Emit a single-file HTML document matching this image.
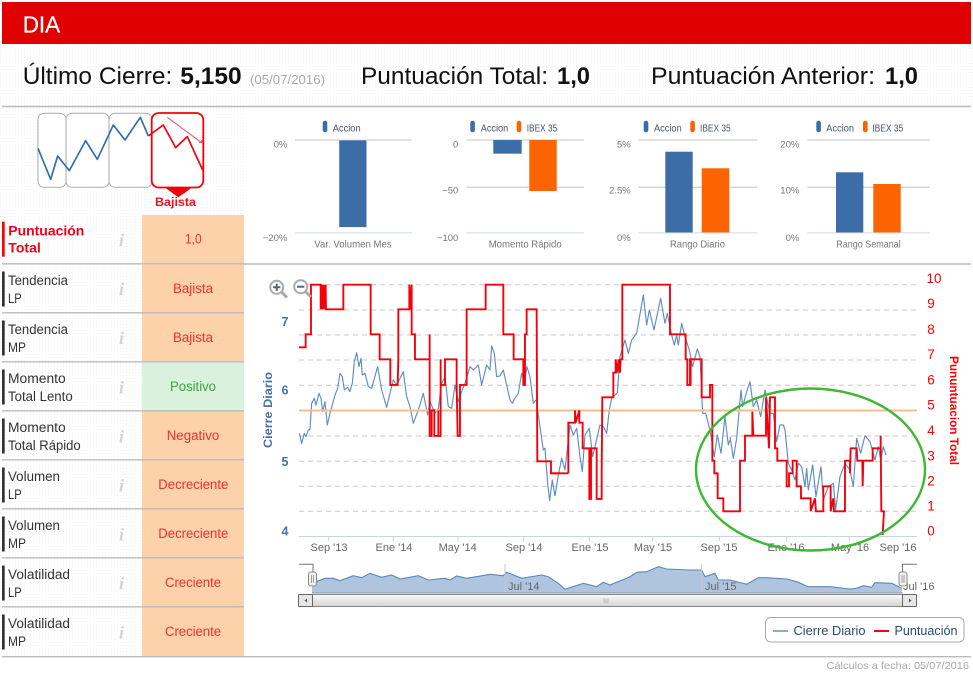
<!DOCTYPE html>
<html lang="es">
<head>
<meta charset="utf-8">
<title>DIA</title>
<style>
html,body{margin:0;padding:0;background:#fff;width:973px;height:675px;overflow:hidden}
svg{display:block;filter:blur(.35px)}
text{font-family:"Liberation Sans",sans-serif}
.lb{font-size:13.5px;fill:#333}
.val{font-size:13.5px;fill:#f03030}
.ax{font-size:9.5px;fill:#777;text-anchor:end}
.leg{font-size:10px;fill:#44566c}
.ttl{font-size:10px;fill:#777}
.xl{font-size:11px;fill:#666;text-anchor:middle}
.yl{font-size:12.5px;fill:#4572a7;font-weight:bold;text-anchor:middle}
.yr{font-size:13.5px;fill:#f00;text-anchor:middle}
.i{font-family:"Liberation Serif",serif;font-style:italic;font-weight:bold;font-size:18px;fill:#d4d4d4;text-anchor:middle}
.sep{stroke:#bbb;stroke-width:1.4}
.grid{stroke:#c4c4c4;stroke-width:1}
.base{stroke:#dfe7f2;stroke-width:1.5}
.dash{stroke:#c8c8c8;stroke-width:1;stroke-dasharray:5 4}
.red{fill:none;stroke:#f5000a;stroke-width:5.6;stroke-linejoin:miter}
.blue{fill:none;stroke:#5e8cc2;stroke-width:3.4;stroke-linejoin:round}
</style>
</head>
<body>
<svg width="973" height="675" viewBox="0 0 973 675" xmlns="http://www.w3.org/2000/svg">
<defs>
<pattern id="dots" width="3" height="3" patternUnits="userSpaceOnUse"><rect width="3" height="3" fill="#fff"/><rect width="1" height="1" fill="#f3f3f3"/></pattern>
<linearGradient id="sb" x1="0" y1="0" x2="0" y2="1"><stop offset="0" stop-color="#fafafa"/><stop offset="1" stop-color="#d4d4d4"/></linearGradient>
</defs>
<rect width="973" height="675" fill="#fff"/>
<rect x="0" y="44" width="973" height="62" fill="url(#dots)"/>
<rect x="0" y="106" width="244" height="550" fill="url(#dots)"/>

<!-- header -->
<rect x="2" y="2" width="969" height="42" fill="#e00000"/>
<text x="22.7" y="32.3" font-size="23.5" fill="#fff" stroke="#fff" stroke-width=".25" textLength="37.5" lengthAdjust="spacingAndGlyphs">DIA</text>

<text x="22.7" y="84" font-size="24.5" fill="#111" textLength="149.6" lengthAdjust="spacingAndGlyphs">Último Cierre:</text>
<text x="180.3" y="84" font-size="24.5" font-weight="bold" fill="#111" textLength="61.4" lengthAdjust="spacingAndGlyphs">5,150</text>
<text x="250" y="84" font-size="12.5" fill="#aaa" textLength="75" lengthAdjust="spacingAndGlyphs">(05/07/2016)</text>
<text x="361" y="84" font-size="24.5" fill="#111" textLength="187" lengthAdjust="spacingAndGlyphs">Puntuación Total:</text>
<text x="557" y="84" font-size="24.5" font-weight="bold" fill="#111" textLength="33" lengthAdjust="spacingAndGlyphs">1,0</text>
<text x="651" y="84" font-size="24.5" fill="#111" textLength="224" lengthAdjust="spacingAndGlyphs">Puntuación Anterior:</text>
<text x="885" y="84" font-size="24.5" font-weight="bold" fill="#111" textLength="33" lengthAdjust="spacingAndGlyphs">1,0</text>
<line x1="2" y1="106.5" x2="971" y2="106.5" class="sep"/>

<!-- trend diagram -->
<g fill="#fff" stroke="#aaa" stroke-width="1">
<rect x="38" y="113.3" width="28" height="74" rx="6"/>
<rect x="66" y="113.3" width="43" height="74" rx="6"/>
<rect x="109" y="113.3" width="43" height="74" rx="6"/>
</g>
<rect x="151.7" y="113" width="51.6" height="74.5" rx="7" fill="#fff" stroke="#f5000a" stroke-width="1.8"/>
<polygon points="165,187.5 191.7,187.5 186,192 178.3,197.3 171,192" fill="#f5000a"/>
<g transform="translate(0,100) scale(.3333)" fill="none" stroke-linejoin="round">
<polyline points="114,145 152,238 173,168 208,212 257,122 292,178 340,75 375,120 421,52 445,108" stroke="#2f6cb3" stroke-width="5"/>
<polyline points="445,108 490,75 527,143 562,110 608,210" stroke="#f5000a" stroke-width="5"/>
<polyline points="502,52 605,128" stroke="#f0506a" stroke-width="3"/>
<polyline points="597,128 607,128 604,120" stroke="#f0506a" stroke-width="3"/>
</g>
<text x="155" y="206" font-size="12" font-weight="bold" fill="#f01020" textLength="41" lengthAdjust="spacingAndGlyphs">Bajista</text>

<!-- left table -->
<g>
<rect x="142" y="215" width="102" height="441" fill="#fdd1aa"/>
<rect x="142" y="362" width="102" height="48.5" fill="#daf1dd"/>
<g class="sep">
<line x1="2" y1="263.8" x2="244" y2="263.8"/><line x1="2" y1="312.8" x2="244" y2="312.8"/><line x1="2" y1="361.8" x2="244" y2="361.8"/><line x1="2" y1="410.8" x2="244" y2="410.8"/><line x1="2" y1="459.8" x2="244" y2="459.8"/><line x1="2" y1="508.8" x2="244" y2="508.8"/><line x1="2" y1="557.8" x2="244" y2="557.8"/><line x1="2" y1="606.8" x2="244" y2="606.8"/>
</g>
<rect x="2" y="221.7" width="2.7" height="35" fill="#f00"/>
<g fill="#333">
<rect x="2" y="271.5" width="2.7" height="35"/><rect x="2" y="320.5" width="2.7" height="35"/><rect x="2" y="369.5" width="2.7" height="35"/><rect x="2" y="418.5" width="2.7" height="35"/><rect x="2" y="467.5" width="2.7" height="35"/><rect x="2" y="516.5" width="2.7" height="35"/><rect x="2" y="565.5" width="2.7" height="35"/><rect x="2" y="614.5" width="2.7" height="35"/>
</g>

<text x="8.3" y="235.3" font-size="13.5" font-weight="bold" fill="#f00018" textLength="76" lengthAdjust="spacingAndGlyphs">Puntuación</text>
<text x="8.3" y="252.3" font-size="13.5" font-weight="bold" fill="#f00018" textLength="32.5" lengthAdjust="spacingAndGlyphs">Total</text>

<text class="lb" x="8" y="285.2" textLength="60" lengthAdjust="spacingAndGlyphs">Tendencia</text><text class="lb" x="8" y="303" textLength="13.7" lengthAdjust="spacingAndGlyphs">LP</text>
<text class="lb" x="8" y="334.2" textLength="60" lengthAdjust="spacingAndGlyphs">Tendencia</text><text class="lb" x="8" y="352" textLength="18" lengthAdjust="spacingAndGlyphs">MP</text>
<text class="lb" x="8" y="383.2" textLength="57.7" lengthAdjust="spacingAndGlyphs">Momento</text><text class="lb" x="8" y="401" textLength="64.7" lengthAdjust="spacingAndGlyphs">Total Lento</text>
<text class="lb" x="8" y="432.2" textLength="57.7" lengthAdjust="spacingAndGlyphs">Momento</text><text class="lb" x="8" y="450" textLength="72.7" lengthAdjust="spacingAndGlyphs">Total Rápido</text>
<text class="lb" x="8" y="481.2" textLength="52" lengthAdjust="spacingAndGlyphs">Volumen</text><text class="lb" x="8" y="499" textLength="13.7" lengthAdjust="spacingAndGlyphs">LP</text>
<text class="lb" x="8" y="530.2" textLength="52" lengthAdjust="spacingAndGlyphs">Volumen</text><text class="lb" x="8" y="548" textLength="18" lengthAdjust="spacingAndGlyphs">MP</text>
<text class="lb" x="8" y="579.2" textLength="62" lengthAdjust="spacingAndGlyphs">Volatilidad</text><text class="lb" x="8" y="597" textLength="13.7" lengthAdjust="spacingAndGlyphs">LP</text>
<text class="lb" x="8" y="628.2" textLength="62" lengthAdjust="spacingAndGlyphs">Volatilidad</text><text class="lb" x="8" y="646" textLength="18" lengthAdjust="spacingAndGlyphs">MP</text>

<text class="i" x="121.5" y="246">i</text><text class="i" x="121.5" y="295">i</text><text class="i" x="121.5" y="344">i</text><text class="i" x="121.5" y="393.5">i</text><text class="i" x="121.5" y="442.5">i</text><text class="i" x="121.5" y="491.5">i</text><text class="i" x="121.5" y="540.5">i</text><text class="i" x="121.5" y="589.5">i</text><text class="i" x="121.5" y="638.5">i</text>

<text class="val" x="185" y="243.5" textLength="16.7" lengthAdjust="spacingAndGlyphs">1,0</text>
<text class="val" x="173" y="293" textLength="40" lengthAdjust="spacingAndGlyphs">Bajista</text>
<text class="val" x="173" y="342" textLength="40" lengthAdjust="spacingAndGlyphs">Bajista</text>
<text x="170" y="391" font-size="13.5" fill="#3da63d" textLength="46" lengthAdjust="spacingAndGlyphs">Positivo</text>
<text class="val" x="166.7" y="440" textLength="52.6" lengthAdjust="spacingAndGlyphs">Negativo</text>
<text class="val" x="158.3" y="489" textLength="70" lengthAdjust="spacingAndGlyphs">Decreciente</text>
<text class="val" x="158.3" y="538" textLength="70" lengthAdjust="spacingAndGlyphs">Decreciente</text>
<text class="val" x="165" y="587" textLength="56" lengthAdjust="spacingAndGlyphs">Creciente</text>
<text class="val" x="165" y="636" textLength="56" lengthAdjust="spacingAndGlyphs">Creciente</text>
</g>

<line x1="244" y1="264" x2="971" y2="264" class="sep"/>

<!-- bar chart 1 -->
<rect x="322.7" y="120.7" width="4.6" height="11.6" rx="2.3" fill="#3d6da6"/>
<text class="leg" x="332.7" y="131.3" textLength="28" lengthAdjust="spacingAndGlyphs">Accion</text>
<line x1="295" y1="140" x2="411.7" y2="140" class="grid"/>
<line x1="295" y1="232.7" x2="411.7" y2="232.7" class="base"/>
<rect x="339" y="140" width="27.7" height="87.3" fill="#3d6da6" stroke="#dde6f2" stroke-width=".6"/>
<text class="ax" x="287.3" y="147.5">0%</text><text class="ax" x="287.3" y="241">−20%</text>
<text class="ttl" x="314.3" y="247.3" textLength="77.4" lengthAdjust="spacingAndGlyphs">Var. Volumen Mes</text>

<!-- bar chart 2 -->
<rect x="470.3" y="120.7" width="4.6" height="11.6" rx="2.3" fill="#3d6da6"/>
<text class="leg" x="480.7" y="131.3" textLength="27.6" lengthAdjust="spacingAndGlyphs">Accion</text>
<rect x="516.7" y="120.7" width="4.6" height="11.6" rx="2.3" fill="#fb6400"/>
<text class="leg" x="526.7" y="131.3" textLength="30.6" lengthAdjust="spacingAndGlyphs">IBEX 35</text>
<line x1="466.7" y1="140" x2="584" y2="140" class="grid"/>
<line x1="466.7" y1="187.3" x2="584" y2="187.3" class="grid"/>
<line x1="466.7" y1="232.7" x2="584" y2="232.7" class="base"/>
<rect x="493.3" y="140" width="28.4" height="13.7" fill="#3d6da6"/>
<rect x="529.3" y="140" width="27.4" height="51" fill="#fb6400"/>
<text class="ax" x="458.3" y="147.5">0</text><text class="ax" x="458.3" y="193.7">−50</text><text class="ax" x="458.3" y="241">−100</text>
<text class="ttl" x="488.7" y="247.3" textLength="73" lengthAdjust="spacingAndGlyphs">Momento Rápido</text>

<!-- bar chart 3 -->
<rect x="643.7" y="120.7" width="4.6" height="11.6" rx="2.3" fill="#3d6da6"/>
<text class="leg" x="654" y="131.3" textLength="27.7" lengthAdjust="spacingAndGlyphs">Accion</text>
<rect x="690.3" y="120.7" width="4.6" height="11.6" rx="2.3" fill="#fb6400"/>
<text class="leg" x="700" y="131.3" textLength="30.7" lengthAdjust="spacingAndGlyphs">IBEX 35</text>
<line x1="638.3" y1="140" x2="757.3" y2="140" class="grid"/>
<line x1="638.3" y1="187.3" x2="757.3" y2="187.3" class="grid"/>
<line x1="638.3" y1="232.7" x2="757.3" y2="232.7" class="base"/>
<rect x="665.3" y="151.7" width="27.4" height="80.8" fill="#3d6da6"/>
<rect x="701.7" y="168.3" width="27.6" height="64.2" fill="#fb6400"/>
<text class="ax" x="630.7" y="147.5">5%</text><text class="ax" x="630.7" y="193.7">2.5%</text><text class="ax" x="630.7" y="241">0%</text>
<text class="ttl" x="670" y="247.3" textLength="55" lengthAdjust="spacingAndGlyphs">Rango Diario</text>

<!-- bar chart 4 -->
<rect x="816.3" y="120.7" width="4.6" height="11.6" rx="2.3" fill="#3d6da6"/>
<text class="leg" x="826.3" y="131.3" textLength="27.7" lengthAdjust="spacingAndGlyphs">Accion</text>
<rect x="863" y="120.7" width="4.6" height="11.6" rx="2.3" fill="#fb6400"/>
<text class="leg" x="872.3" y="131.3" textLength="31" lengthAdjust="spacingAndGlyphs">IBEX 35</text>
<line x1="807.3" y1="140" x2="930" y2="140" class="grid"/>
<line x1="807.3" y1="187.3" x2="930" y2="187.3" class="grid"/>
<line x1="807.3" y1="232.7" x2="930" y2="232.7" class="base"/>
<rect x="836" y="172.3" width="27.3" height="60.2" fill="#3d6da6"/>
<rect x="873.3" y="184" width="27.4" height="48.5" fill="#fb6400"/>
<text class="ax" x="799.3" y="147.5">20%</text><text class="ax" x="799.3" y="193.7">10%</text><text class="ax" x="799.3" y="241">0%</text>
<text class="ttl" x="836.3" y="247.3" textLength="64.4" lengthAdjust="spacingAndGlyphs">Rango Semanal</text>

<!-- main chart grid -->
<g class="dash">
<line x1="299" y1="284.7" x2="917" y2="284.7"/><line x1="299" y1="310" x2="917" y2="310"/><line x1="299" y1="335" x2="917" y2="335"/><line x1="299" y1="360" x2="917" y2="360"/><line x1="299" y1="385.3" x2="917" y2="385.3"/><line x1="299" y1="436" x2="917" y2="436"/><line x1="299" y1="461.3" x2="917" y2="461.3"/><line x1="299" y1="486.3" x2="917" y2="486.3"/><line x1="299" y1="511.3" x2="917" y2="511.3"/>
</g>
<line x1="299" y1="536.5" x2="917" y2="536.5" stroke="#c5d4e6" stroke-width="1"/>
<g stroke="#c5d4e6" stroke-width="1">
<line x1="328.7" y1="536.5" x2="328.7" y2="541"/><line x1="393.3" y1="536.5" x2="393.3" y2="541"/><line x1="458" y1="536.5" x2="458" y2="541"/><line x1="523.7" y1="536.5" x2="523.7" y2="541"/><line x1="589.3" y1="536.5" x2="589.3" y2="541"/><line x1="652.7" y1="536.5" x2="652.7" y2="541"/><line x1="719.3" y1="536.5" x2="719.3" y2="541"/><line x1="786.7" y1="536.5" x2="786.7" y2="541"/><line x1="849.3" y1="536.5" x2="849.3" y2="541"/><line x1="930" y1="536.5" x2="930" y2="541"/>
</g>

<!-- blue series -->
<g transform="translate(255,270) scale(.3333)">
<polyline class="blue" points="133,490 140,520 148,490 153,500 160,480 165,478 170,400 178,385 183,405 192,370 198,385 203,425 210,395 217,465 225,430 240,375 248,355 255,310 262,320 268,360 278,352 284,365 292,340 298,275 305,248 312,290 318,265 322,315 330,310 340,350 350,355 368,290 380,360 395,412 405,370 415,330 425,345 445,305 455,380 465,410 475,460 490,420 505,370 518,435 525,395 540,430 550,415 560,340 570,320 580,410 590,415 600,345 610,395 620,365 630,340 645,290 655,300 670,285 680,345 695,285 705,300 710,228 718,250 725,320 735,318 745,300 755,345 765,390 772,400 780,385 790,370 800,310 808,340 816,290 825,320 835,400 845,388 848,420 855,470 865,540 870,535 878,640 884,692 892,630 900,678"/>
</g>
<g transform="translate(530,270) scale(.3333)">
<polyline class="blue" points="75,678 85,615 95,565 105,600 120,465 130,495 140,475 150,560 157,605 165,495 178,475 188,560 195,530 210,465 220,470 230,490 238,420 245,385 262,368 270,260 285,210 295,250 305,210 320,190 340,75 350,165 358,120 372,180 392,85 405,160 412,130 425,195 433,225 440,195 445,225 455,160 465,200 478,240 488,290 502,237 510,260 518,430 527,430 540,480 553,560 562,495 573,550 585,440 595,525 600,510"/>
</g>
<g transform="translate(690,270) scale(.3333)">
<polyline class="blue" points="120,500 130,565 140,505 153,360 158,410 170,365 180,335 190,410 200,390 212,440 225,360 240,430 250,430 260,515 270,465 280,465 285,480 295,580 305,600 315,630 325,580 335,590 345,650 350,595 355,660 368,585 378,680 393,590 400,690 415,650 430,640 437,720 450,620 465,580 480,600 490,650 500,505 512,550 525,497 540,515 555,570 565,530 572,570 580,530 588,555"/>
</g>

<line x1="299" y1="410.5" x2="917" y2="410.5" stroke="#f9bd88" stroke-width="2"/>

<!-- red series -->
<g transform="translate(255,270) scale(.3333)">
<polyline class="red" points="132,232 152,232 152,193 168,193 168,44 197,44 197,118 200,44 203,118 206,44 209,118 212,44 213,118 265,118 265,44 347,44 347,193 374,193 374,268 406,268 406,345 428,345 430,268 430,118 463,118 463,44 466,118 470,44 470,193 480,193 480,268 524,268 524,193 524,498 530,498 530,421 538,421 538,498 550,498 550,421 550,498 557,498 557,268 557,345 570,345 570,268 605,268 605,345 608,498 615,498 615,345 635,345 635,118 692,118 692,44 745,44 745,193 776,193 776,268 805,268 805,345 810,345 810,193 815,193 815,118 845,118 847,574 888,574 888,610 915,610"/>
</g>
<g transform="translate(530,270) scale(.3333)">
<polyline class="red" points="115,610 115,458 135,458 135,421 137,458 148,421 148,458 158,458 158,535 178,535 178,687 183,687 183,535 200,535 200,687 215,687 215,610 217,382 250,382 250,308 257,308 257,268 262,308 266,268 270,308 272,268 277,268 277,44 420,44 420,193 467,193 467,268 472,268 472,345 482,345 482,268 495,268"/>
<polyline class="red" points="62,610 115,610"/>
</g>
<g transform="translate(690,270) scale(.3333)">
<polyline class="red" points="0,345 0,268 35,268 35,382 60,382 60,345 67,345 67,572 73,572 73,610 83,610 83,685 100,685 100,724 150,724 150,572 165,572 165,497 187,497 187,425 190,497 228,497 228,382 237,535 240,382 255,382 255,535 262,535 262,572 290,572 290,649 297,649 297,610 308,610 308,572 320,572 320,649 333,649 333,685 362,685 362,724 375,685 378,724 400,724 400,649 422,649 422,724 430,685 432,724 465,724 465,572 480,572 480,610 482,535 500,535 502,572 517,572 518,649 520,572 548,572 548,535 572,535 572,497 574,724 582,724 578,795"/>
</g>

<!-- axes text -->
<text class="yl" x="285" y="326">7</text><text class="yl" x="285" y="394.5">6</text><text class="yl" x="285" y="466">5</text><text class="yl" x="285" y="535.5">4</text>
<text transform="translate(272,410) rotate(-90)" font-size="12" font-weight="bold" fill="#4572a7" text-anchor="middle" textLength="76" lengthAdjust="spacingAndGlyphs">Cierre Diario</text>

<text class="yr" x="934" y="283">10</text><text class="yr" x="931" y="308">9</text><text class="yr" x="931" y="334">8</text><text class="yr" x="931" y="359">7</text><text class="yr" x="931" y="384.6">6</text><text class="yr" x="931" y="409.6">5</text><text class="yr" x="931" y="435">4</text><text class="yr" x="931" y="460.3">3</text><text class="yr" x="931" y="485.3">2</text><text class="yr" x="931" y="510.6">1</text><text class="yr" x="931" y="535.6">0</text>
<text transform="translate(950,410.5) rotate(90)" font-size="12" font-weight="bold" fill="#f00" text-anchor="middle" textLength="109" lengthAdjust="spacingAndGlyphs">Pununtuacion Total</text>

<text class="xl" x="329" y="551">Sep '13</text><text class="xl" x="394" y="551">Ene '14</text><text class="xl" x="457.7" y="551">May '14</text><text class="xl" x="524" y="551">Sep '14</text><text class="xl" x="590" y="551">Ene '15</text><text class="xl" x="653" y="551">May '15</text><text class="xl" x="719" y="551">Sep '15</text><text class="xl" x="786" y="551">Ene '16</text><text class="xl" x="850" y="551">May '16</text><text class="xl" x="898" y="551">Sep '16</text>

<!-- zoom icons -->
<g fill="#fff" stroke="#aaa">
<line x1="281.5" y1="292" x2="287" y2="297.5" stroke-width="3"/>
<circle cx="276.7" cy="287.3" r="6.5" stroke-width="2"/>
<line x1="305.5" y1="291.5" x2="311" y2="297" stroke-width="3"/>
<circle cx="300.7" cy="286.7" r="6.5" stroke-width="2"/>
</g>
<path d="M273 287.3h7.4M276.7 283.6v7.4" stroke="#4a6b84" stroke-width="2" fill="none"/>
<path d="M297 286.7h7.4" stroke="#4a6b84" stroke-width="2" fill="none"/>

<!-- navigator -->
<path d="M312 592.7V583.3L325 578.3 333.3 578.3 340 580.7 353.3 575.7 361.7 577.7 370 573.3 381.7 577.3 391.7 575 400 579 418.3 575.7 428.3 580 445 578.3 450 580 456.7 576 466.7 578.3 490 574.3 503.3 575.7 506.7 572.3 521.7 578.3 541.7 575 548.3 576.7 558.3 583.3 565 589.3 583.3 583.3 596.7 586.7 603.3 582.3 610 585 630 576.7 636.7 572.3 646.7 571.7 658.3 566.7 666.7 569 690 570 701.7 570 705 576.7 715 573.3 718.3 580 730 580 746.7 584.3 758.3 577.7 766.7 577.7 786.7 579 796.7 581.7 808.3 586.7 830 586.7 850 589 856.7 588.3 863.3 585.7 871.7 587.3 875 582.7 891.7 583.3 901.7 588.3V592.7Z" fill="#aec4df" stroke="none"/>
<path d="M312 583.3L325 578.3 333.3 578.3 340 580.7 353.3 575.7 361.7 577.7 370 573.3 381.7 577.3 391.7 575 400 579 418.3 575.7 428.3 580 445 578.3 450 580 456.7 576 466.7 578.3 490 574.3 503.3 575.7 506.7 572.3 521.7 578.3 541.7 575 548.3 576.7 558.3 583.3 565 589.3 583.3 583.3 596.7 586.7 603.3 582.3 610 585 630 576.7 636.7 572.3 646.7 571.7 658.3 566.7 666.7 569 690 570 701.7 570 705 576.7 715 573.3 718.3 580 730 580 746.7 584.3 758.3 577.7 766.7 577.7 786.7 579 796.7 581.7 808.3 586.7 830 586.7 850 589 856.7 588.3 863.3 585.7 871.7 587.3 875 582.7 891.7 583.3 901.7 588.3" fill="none" stroke="#5b87bd" stroke-width="1.1"/>
<line x1="505" y1="564" x2="505" y2="593" stroke="#c8c8c8" stroke-width="1"/>
<line x1="701.7" y1="564" x2="701.7" y2="593" stroke="#c8c8c8" stroke-width="1"/>
<text x="508" y="590" font-size="11" fill="#666">Jul '14</text>
<text x="705" y="590" font-size="11" fill="#666">Jul '15</text>
<text x="903" y="590" font-size="11" fill="#666">Jul '16</text>
<path d="M299 564.3H313V572M902.5 572V564.3H917" fill="none" stroke="#777" stroke-width="1"/>
<rect x="308.5" y="572" width="8" height="14" rx="2.5" fill="#f2f2f2" stroke="#888" stroke-width="1"/>
<path d="M311.5 575v8M313.5 575v8" stroke="#888" stroke-width=".8"/>
<rect x="899" y="572" width="8" height="14" rx="2.5" fill="#f2f2f2" stroke="#888" stroke-width="1"/>
<path d="M902 575v8M904 575v8" stroke="#888" stroke-width=".8"/>
<line x1="312" y1="593" x2="903" y2="593" stroke="#777" stroke-width=".8"/>
<rect x="298.5" y="594.5" width="618" height="12" rx="1" fill="url(#sb)" stroke="#888" stroke-width="1"/>
<rect x="298.5" y="594.5" width="14" height="12" rx="1" fill="#e6e6e6" stroke="#666" stroke-width="1"/>
<rect x="902.5" y="594.5" width="14" height="12" rx="1" fill="#e6e6e6" stroke="#666" stroke-width="1"/>
<path d="M307 598.5v4l-2.5-2z" fill="#555"/>
<path d="M909 598.5v4l2.5-2z" fill="#555"/>
<path d="M604 598.5v4.5M606 598.5v4.5M608 598.5v4.5" stroke="#aaa" stroke-width=".8"/>

<!-- legend -->
<rect x="765.5" y="617.5" width="198.5" height="24.5" rx="5" fill="#fff" stroke="#aaa" stroke-width="1"/>
<line x1="773" y1="631" x2="788" y2="631" stroke="#8eacd3" stroke-width="2"/>
<text x="793.5" y="635" font-size="12.5" fill="#274b6d" textLength="72" lengthAdjust="spacingAndGlyphs">Cierre Diario</text>
<line x1="874" y1="631" x2="889" y2="631" stroke="#f00" stroke-width="2"/>
<text x="894.5" y="635" font-size="12.5" fill="#274b6d" textLength="63" lengthAdjust="spacingAndGlyphs">Puntuación</text>

<!-- green ellipse -->
<ellipse cx="810.5" cy="469.5" rx="114.5" ry="81" fill="none" stroke="#3cb832" stroke-width="2.4"/>

<!-- footer -->
<line x1="2" y1="656.7" x2="971" y2="656.7" class="sep"/>
<text x="826.5" y="669" font-size="10.5" fill="#aaa" textLength="142.5" lengthAdjust="spacingAndGlyphs">Cálculos a fecha: 05/07/2016</text>
</svg>
</body>
</html>
